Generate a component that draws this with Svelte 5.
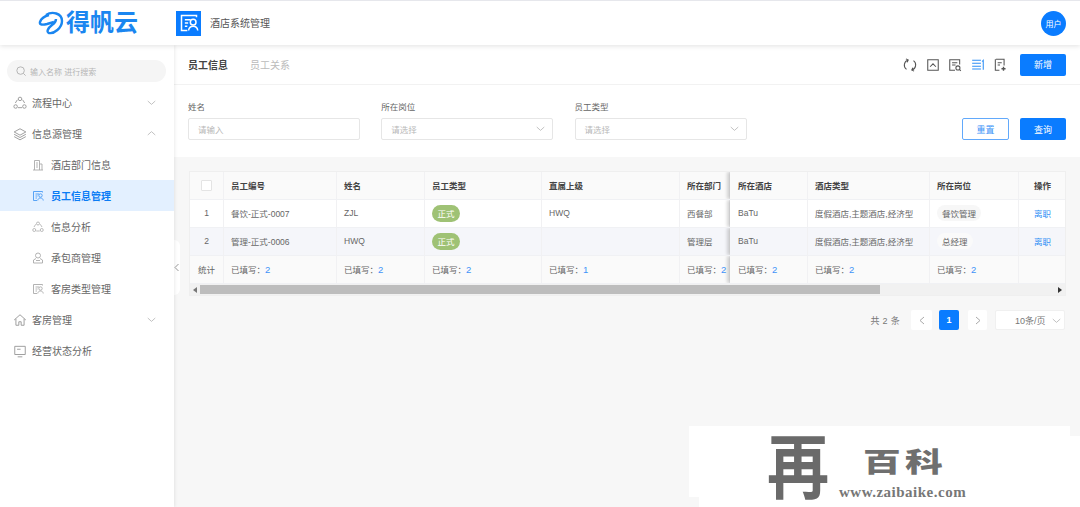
<script>
	const columns = [
		{ title: '员工编号', total: 2 },
		{ title: '姓名', total: 2 },
		{ title: '员工类型', total: 2 },
		{ title: '直属上级', total: 1 },
		{ title: '所在部门', total: 2 },
		{ title: '所在酒店', total: 2 },
		{ title: '酒店类型', total: 2 },
		{ title: '所在岗位', total: 2 }
	];
	const rows = [
		{ no: 1, code: '餐饮-正式-0007', name: 'ZJL', boss: 'HWQ', dept: '西餐部', post: '餐饮管理' },
		{ no: 2, code: '管理-正式-0006', name: 'HWQ', boss: '', dept: '管理层', post: '总经理' }
	];
	const hotelType = '度假酒店,主题酒店,经济型';
</script>

{#snippet docPerson(color, size)}
	<svg width={size} height={size} viewBox="0 0 24 24" fill="none" stroke={color} stroke-width="1.8">
		<path d="M21 5V3H3v18h7" />
		<path d="M7 8h7M7 12h4M7 16h3" />
		<circle cx="17" cy="11" r="3.4" />
		<path d="M11.5 21c.4-3.4 2.600-5 5.500-5s5.100 1.600 5.500 5" />
	</svg>
{/snippet}

{#snippet triad(size, color)}
	<svg width={size} height={size} viewBox="0 0 24 24" fill="none" stroke={color} stroke-width="1.6">
		<circle cx="12" cy="5" r="3" />
		<circle cx="4.500" cy="18" r="3" />
		<circle cx="19.500" cy="18" r="3" />
		<path d="M7.500 6.500 4 12M16.500 6.500 20 12M8.500 20h7" />
	</svg>
{/snippet}

{#snippet chevron(dir)}
	<svg class="chev" width="9" height="9" viewBox="0 0 12 12" fill="none" stroke="#b5b5b5" stroke-width="1.100">
		{#if dir === 'down'}<path d="M1 4l5 4.500L11 4" />{:else}<path d="M1 8l5-4.500L11 8" />{/if}
	</svg>
{/snippet}

<div class="app">
	<header class="topbar">
		<div class="brand">
			<svg width="26" height="26" viewBox="0 0 26 26" fill="none" stroke="#1a86f0" stroke-width="2.400">
				<path d="M8 5c6-4 16-2 16 6 0 7-8 13-13 12-3-1-1-5 3-8 3-2 4-4 4-6" />
				<path d="M11 5c-4 1-8 4-9 7-1 3 3 3 7 2l7-2" />
			</svg>
			<span class="brand-name">得帆云</span>
		</div>
		<div class="app-icon">{@render docPerson('#fff', 20)}</div>
		<span class="app-name">酒店系统管理</span>
		<div class="avatar">用户</div>
	</header>

	<div class="body">
		<aside class="sidebar">
			<div class="search">
				<svg width="10" height="10" viewBox="0 0 12 12" fill="none" stroke="#a8a8a8" stroke-width="1">
					<circle cx="5.500" cy="5.500" r="4.500" /><path d="M9 9l2.500 2.500" />
				</svg>
				<span>输入名称 进行搜索</span>
			</div>
			<nav>
				<div class="item">{@render triad(14, '#999')}<span>流程中心</span>{@render chevron('down')}</div>
				<div class="item">
					<svg width="14" height="14" viewBox="0 0 24 24" fill="none" stroke="#999" stroke-width="1.600">
						<path d="M12 3l10 5.500L12 14 2 8.500zM2 12.500 12 18l10-5.500M2 16.500 12 22l10-5.500" />
					</svg>
					<span>信息源管理</span>{@render chevron('up')}
				</div>
				<div class="item sub">
					<svg width="12" height="12" viewBox="0 0 24 24" fill="none" stroke="#aaa" stroke-width="1.800">
						<path d="M5 22V3h10v19M15 10h5v12M2 22h20M8 8h4M8 12h4M8 16h4" />
					</svg>
					<span>酒店部门信息</span>
				</div>
				<div class="item sub active">{@render docPerson('#4a9bf5', 12)}<span>员工信息管理</span></div>
				<div class="item sub">{@render triad(12, '#aaa')}<span>信息分析</span></div>
				<div class="item sub">
					<svg width="12" height="12" viewBox="0 0 24 24" fill="none" stroke="#aaa" stroke-width="1.800">
						<circle cx="12" cy="7" r="5" /><path d="M8 13l-5 3v6h18v-6l-5-3M8 17h8" />
					</svg>
					<span>承包商管理</span>
				</div>
				<div class="item sub">{@render docPerson('#aaa', 12)}<span>客房类型管理</span></div>
				<div class="item">
					<svg width="14" height="14" viewBox="0 0 24 24" fill="none" stroke="#999" stroke-width="1.600">
						<path d="M2 12 12 3l10 9M5 10v11h5v-6h4v6h5V10" />
					</svg>
					<span>客房管理</span>{@render chevron('down')}
				</div>
				<div class="item">
					<svg width="14" height="14" viewBox="0 0 24 24" fill="none" stroke="#999" stroke-width="1.600">
						<path d="M3 4h18v14H3zM8 22h8M7 9h6" />
					</svg>
					<span>经营状态分析</span>
				</div>
			</nav>
		</aside>

		<main class="main">
			<div class="handle">
				<svg width="6" height="9" viewBox="0 0 6 9" fill="none" stroke="#999" stroke-width="1"><path d="M4.500 1 1 4.500 4.500 8" /></svg>
			</div>

			<section class="tabs">
				<span class="tab on">员工信息</span>
				<span class="tab">员工关系</span>
				<div class="tools">
					<svg width="14" height="14" viewBox="0 0 24 24" fill="none" stroke="#555" stroke-width="1.800">
						<path d="M9 3.500a9 9 0 0 0-3 16M15 20.500a9 9 0 0 0 3-16M5 1.500l4 2-2 4M19 22.500l-4-2 2-4" />
					</svg>
					<svg width="14" height="14" viewBox="0 0 24 24" fill="none" stroke="#555" stroke-width="1.800">
						<path d="M3 3h18v18H3zM7 15l5-5 5 5" />
					</svg>
					<svg width="14" height="14" viewBox="0 0 24 24" fill="none" stroke="#555" stroke-width="1.800">
						<path d="M20 11V3H3v18h9M7 8h9M7 12h6" /><circle cx="17" cy="17" r="3.500" /><path d="M19.500 19.500 22 22" />
					</svg>
					<svg width="14" height="14" viewBox="0 0 24 24" fill="none" stroke="#2f8ff5" stroke-width="1.800">
						<path d="M2 4h15M2 9h15M2 14h15M2 19h15M21 20V4l-2 2" />
					</svg>
					<svg width="14" height="14" viewBox="0 0 24 24" fill="none" stroke="#555" stroke-width="1.800">
						<path d="M5 2h14v11M11 21H4V2M8 8h7M8 12h4" /><path d="M18 15v7M14.500 18.500h7" stroke-width="2.400" />
					</svg>
				</div>
				<button class="btn primary">新增</button>
			</section>

			<section class="filters">
				<label class="field">
					<span>姓名</span>
					<div class="control">请输入</div>
				</label>
				<label class="field">
					<span>所在岗位</span>
					<div class="control">请选择{@render chevron('down')}</div>
				</label>
				<label class="field">
					<span>员工类型</span>
					<div class="control">请选择{@render chevron('down')}</div>
				</label>
				<div class="actions">
					<button class="btn ghost">重置</button>
					<button class="btn primary">查询</button>
				</div>
			</section>

			<section class="content">
				<div class="table">
					<div class="row head">
						<div class="cell center"><i class="check"></i></div>
						{#each columns as col, i}
							<div class="cell" class:pin={i === 5}>{col.title}</div>
						{/each}
						<div class="cell center">操作</div>
					</div>
					{#each rows as r, idx}
						<div class="row" class:alt={idx === 1}>
							<div class="cell center">{r.no}</div>
							<div class="cell">{r.code}</div>
							<div class="cell">{r.name}</div>
							<div class="cell"><span class="tag">正式</span></div>
							<div class="cell">{r.boss}</div>
							<div class="cell">{r.dept}</div>
							<div class="cell pin">BaTu</div>
							<div class="cell">{hotelType}</div>
							<div class="cell"><span class="post">{r.post}</span></div>
							<div class="cell center link">离职</div>
						</div>
					{/each}
					<div class="row foot">
						<div class="cell center">统计</div>
						{#each columns as col, i}
							<div class="cell" class:pin={i === 5}>已填写：<em>{col.total}</em></div>
						{/each}
						<div class="cell"></div>
					</div>
					<div class="scroll">
						<svg width="4" height="6" viewBox="0 0 4 6"><path d="M4 0v6L0 3z" fill="#777" /></svg>
						<div class="track"><div class="thumb"></div></div>
						<svg width="4" height="6" viewBox="0 0 4 6"><path d="M0 0v6l4-3z" fill="#333" /></svg>
					</div>
				</div>

				<div class="pager">
					<span class="count">共 2 条</span>
					<span class="page prev">
						<svg width="6" height="9" viewBox="0 0 6 9" fill="none" stroke="#aaa"><path d="M5 1 1 4.500 5 8" /></svg>
					</span>
					<span class="page current">1</span>
					<span class="page next">
						<svg width="6" height="9" viewBox="0 0 6 9" fill="none" stroke="#aaa"><path d="M1 1l4 3.500L1 8" /></svg>
					</span>
					<span class="size">10条/页{@render chevron('down')}</span>
				</div>
			</section>
		</main>
	</div>

	<div class="mark">
		<span class="mark-big">再</span>
		<div class="mark-text">
			<span class="mark-title">百科</span>
			<span class="mark-url">www.zaibaike.com</span>
		</div>
	</div>
</div>

<style>
	:global(body) {
		margin: 0;
		background: #f7f7f7;
	}
	.app {
		position: relative;
		width: 1080px;
		height: 507px;
		overflow: hidden;
		display: flex;
		flex-direction: column;
		font-family: 'Liberation Sans', 'Noto Sans CJK SC', sans-serif;
		font-size: 9px;
		color: #666;
	}
	.topbar {
		position: relative;
		z-index: 3;
		height: 45px;
		box-sizing: border-box;
		border-top: 1px solid #e6e7ec;
		display: flex;
		align-items: center;
		background: #fff;
		box-shadow: 0 1px 5px rgba(0, 0, 0, 0.12);
	}
	.brand {
		width: 176px;
		display: flex;
		align-items: center;
		gap: 2px;
		padding-left: 38px;
		box-sizing: border-box;
	}
	.brand-name {
		font-size: 24px;
		line-height: 26px;
		font-weight: 700;
		color: #1a86f0;
	}
	.app-icon {
		width: 25px;
		height: 25px;
		background: #0a7cff;
		display: flex;
		align-items: center;
		justify-content: center;
	}
	.app-name {
		margin-left: 9px;
		margin-bottom: 1px;
		font-size: 10px;
		color: #555;
	}
	.avatar {
		margin-left: auto;
		margin-right: 14px;
		width: 25px;
		height: 25px;
		border-radius: 50%;
		background: #0a7cff;
		color: #fff;
		font-size: 8px;
		display: flex;
		align-items: center;
		justify-content: center;
	}
	.body {
		flex: 1;
		display: flex;
		min-height: 0;
	}
	.sidebar {
		position: relative;
		z-index: 2;
		width: 174px;
		box-sizing: border-box;
		padding-top: 15px;
		background: #fff;
		box-shadow: 1px 0 3px rgba(0, 0, 0, 0.08);
	}
	.search {
		margin: 0 8px 0 7px;
		height: 22px;
		border-radius: 11px;
		background: #f5f5f5;
		display: flex;
		align-items: center;
		gap: 4px;
		padding-left: 9px;
		font-size: 8px;
		color: #b5b5b5;
	}
	nav {
		margin-top: 5px;
	}
	.item {
		height: 31px;
		display: flex;
		align-items: center;
		gap: 5px;
		padding-left: 13px;
		padding-right: 18px;
		font-size: 10px;
		color: #666;
	}
	.item.sub {
		padding-left: 32px;
		gap: 7px;
	}
	.item.active {
		background: #e3f0ff;
		color: #0a7cf5;
		font-weight: 700;
	}
	.chev {
		margin-left: auto;
	}
	.main {
		position: relative;
		flex: 1;
		min-width: 0;
	}
	.handle {
		position: absolute;
		left: 0;
		top: 195px;
		width: 6px;
		height: 55px;
		background: #fff;
		border-radius: 0 6px 6px 0;
		display: flex;
		align-items: center;
		z-index: 1;
	}
	.tabs {
		height: 40px;
		box-sizing: border-box;
		border-bottom: 1px solid #f2f2f2;
		background: #fff;
		display: flex;
		align-items: center;
		padding: 0 14px;
		gap: 22px;
	}
	.tab {
		font-size: 10px;
		color: #bbb;
	}
	.tab.on {
		font-weight: 700;
		color: #444;
	}
	.tools {
		margin-left: auto;
		margin-right: -9px;
		display: flex;
		gap: 8.500px;
	}
	.btn {
		width: 46px;
		height: 22px;
		box-sizing: border-box;
		border-radius: 2px;
		border: 1px solid transparent;
		font-family: inherit;
		font-size: 9px;
		padding: 0;
	}
	.btn.primary {
		background: #0a7cff;
		color: #fff;
	}
	.btn.ghost {
		width: 47px;
		background: #fff;
		border-color: #62a9fb;
		color: #3d94f8;
	}
	.filters {
		height: 72px;
		box-sizing: border-box;
		background: #fff;
		padding: 17px 14px 0;
		display: flex;
		gap: 21.250px;
	}
	.field {
		width: 172px;
		display: flex;
		flex-direction: column;
		gap: 5px;
		font-size: 8.500px;
		color: #666;
	}
	.field span {
		line-height: 11px;
	}
	.control {
		height: 22px;
		box-sizing: border-box;
		border: 1px solid #e6e6e6;
		border-radius: 2px;
		display: flex;
		align-items: center;
		padding: 0 7px 1px 9px;
		color: #b8b8b8;
	}
	.actions {
		margin-left: auto;
		align-self: flex-start;
		margin-top: 16px;
		display: flex;
		gap: 11px;
	}
	.content {
		padding: 14px 14px 0 15px;
	}
	.table {
		width: 877px;
		border: 1px solid #efefef;
		box-sizing: border-box;
		background: #fafafa;
	}
	.row {
		display: grid;
		grid-template-columns: 34px 113px 88px 117px 138px 50px 78px 122px 89px 47px;
		height: 28px;
		background: #fff;
		border-bottom: 1px solid #f0f1f4;
		box-sizing: border-box;
	}
	.row.head,
	.row.foot {
		background: #fafafa;
	}
	.row.head {
		color: #444;
		font-weight: 700;
		font-size: 8.500px;
	}
	.row.alt {
		background: #f5f6fa;
	}
	.cell {
		display: flex;
		align-items: center;
		padding-left: 7px;
		padding-bottom: 1px;
		border-right: 1px solid #f1f1f3;
		white-space: nowrap;
		overflow: hidden;
		font-size: 8.500px;
		color: #666;
	}
	.row.head .cell {
		color: #444;
	}
	.cell:last-child {
		border-right: none;
	}
	.cell.center {
		justify-content: center;
		padding-left: 0;
	}
	.cell.pin {
		box-shadow: -3px 0 3px rgba(0, 0, 0, 0.16);
		clip-path: inset(0 0 0 -6px);
		padding-left: 8px;
	}
	.check {
		width: 9px;
		height: 9px;
		background: #fff;
		border: 1px solid #e4e4e4;
		border-radius: 1px;
	}
	.tag {
		width: 28px;
		height: 17px;
		border-radius: 9px;
		background: #9fc275;
		color: #fff;
		display: flex;
		align-items: center;
		justify-content: center;
	}
	.post {
		height: 16px;
		padding: 0 5px;
		border-radius: 8px;
		background: #f7f7f7;
		display: flex;
		align-items: center;
	}
	.row.alt .post {
		background: #fafafa;
	}
	.link {
		color: #2f8ff5;
	}
	em {
		font-style: normal;
		font-size: 9.500px;
		color: #3d94f8;
	}
	.scroll {
		height: 11px;
		background: #f1f1f1;
		display: flex;
		align-items: center;
		gap: 3px;
		padding: 0 3px;
		box-sizing: border-box;
	}
	.track {
		flex: 1;
		height: 9px;
	}
	.thumb {
		width: 680px;
		height: 100%;
		background: #bdbdbd;
	}
	.pager {
		margin-top: 14px;
		margin-right: 1px;
		display: flex;
		justify-content: flex-end;
		align-items: center;
		height: 20px;
	}
	.count {
		color: #777;
		font-size: 9px;
		letter-spacing: 0.3px;
		margin-right: 11px;
	}
	.page {
		width: 20px;
		height: 20px;
		display: flex;
		align-items: center;
		justify-content: center;
		background: #fff;
		border-radius: 2px;
		font-size: 9px;
	}
	.page.prev {
		width: 21px;
	}
	.page.current {
		margin: 0 9px 0 7px;
		background: #0a7cff;
		color: #fff;
		font-weight: 700;
	}
	.page.next {
		width: 19px;
		margin-right: 8px;
	}
	.size {
		width: 70px;
		height: 20px;
		box-sizing: border-box;
		background: #fff;
		border: 1px solid #f0f0f0;
		border-radius: 2px;
		display: flex;
		align-items: center;
		padding: 0 3px 0 19px;
		color: #777;
		font-size: 9px;
	}
	.mark {
		position: absolute;
		left: 689px;
		top: 426px;
		width: 391px;
		height: 81px;
		background: #fff;
		clip-path: polygon(0 0, 381px 0, 381px 10px, 100% 10px, 100% 100%, 10px 100%, 10px 71px, 0 71px);
		display: flex;
		color: #6f6f6f;
		z-index: 4;
	}
	.mark-big {
		margin-left: 82px;
		width: 66px;
		font-size: 54px;
		line-height: 76px;
		font-weight: 700;
		color: #6a6a6a;
		font-family: 'Noto Sans CJK SC', sans-serif;
		transform: scale(1.15, 1.3);
		transform-origin: 40% 50%;
	}
	.mark-text {
		display: flex;
		flex-direction: column;
		align-items: center;
		margin-left: 2px;
		padding-top: 21px;
	}
	.mark-title {
		font-size: 27px;
		line-height: 27px;
		font-weight: 900;
		letter-spacing: 3px;
		margin-left: 4px;
		transform: scaleX(1.4);
		font-family: 'Noto Sans CJK SC', sans-serif;
	}
	.mark-url {
		margin-top: 10px;
		font-family: 'Liberation Serif', serif;
		font-size: 15px;
		font-weight: 700;
		letter-spacing: 0.5px;
		color: #777;
	}
</style>
